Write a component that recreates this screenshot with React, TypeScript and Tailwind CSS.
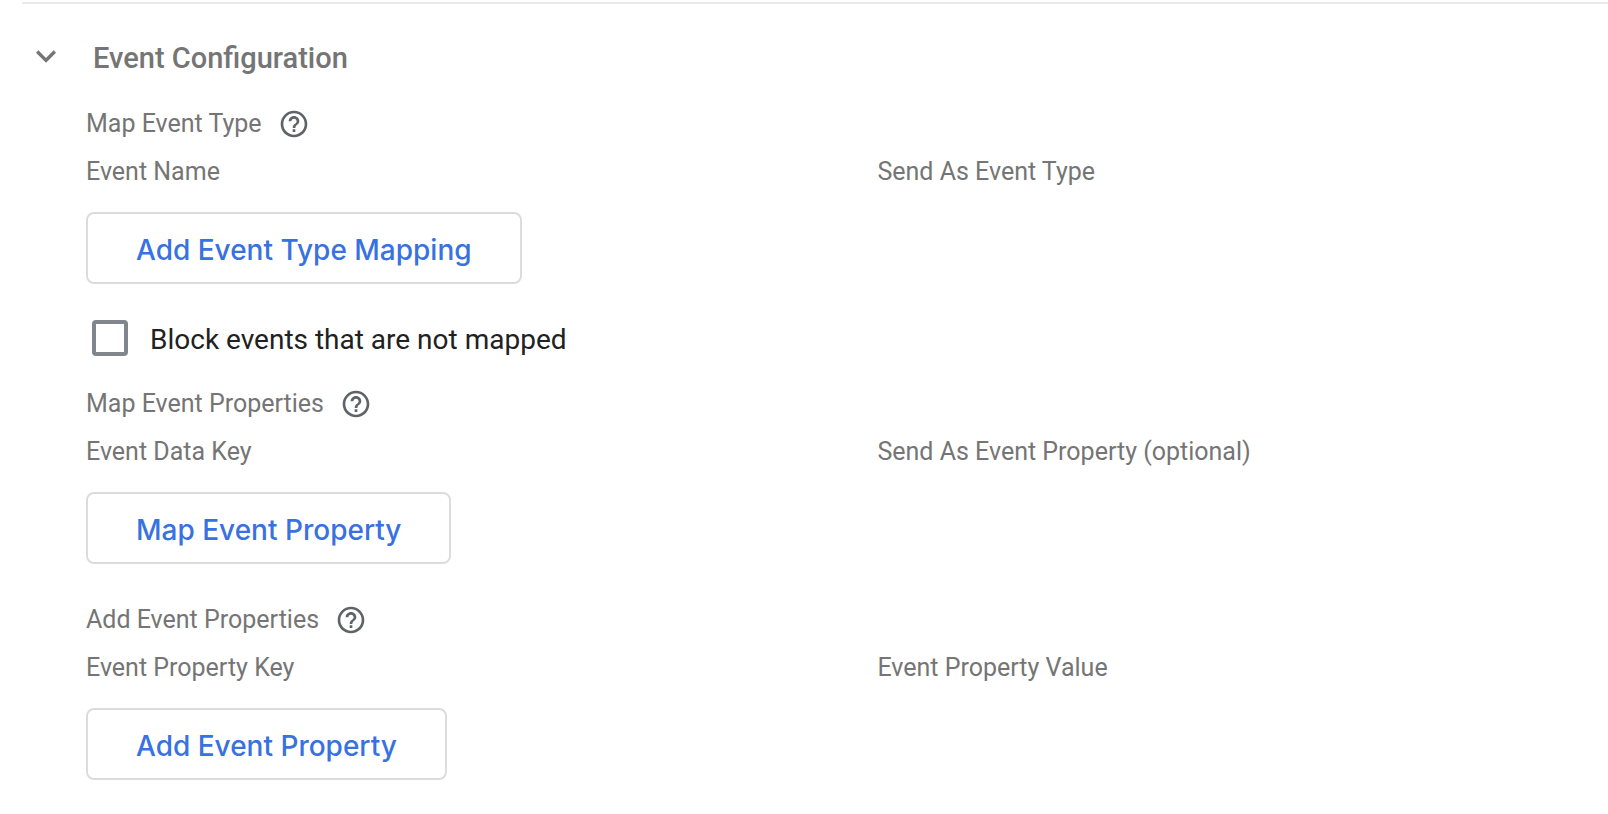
import { useState } from "react";
import { MdExpandMore, MdHelpOutline } from "react-icons/md";

type MappingSectionProps = {
  title: string;
  keyLabel: string;
  valueLabel: string;
  action: string;
};

function MappingSection({ title, keyLabel, valueLabel, action }: MappingSectionProps) {
  return (
    <section>
      <div className="flex items-center gap-4">
        <h3>{title}</h3>
        <button type="button" aria-label={`Help: ${title}`} className="text-[#5f6368]">
          <MdHelpOutline size={32} />
        </button>
      </div>
      <div className="grid grid-cols-[13fr_12fr]">
        <span>{keyLabel}</span>
        <span>{valueLabel}</span>
      </div>
      <button
        type="button"
        className="mt-4 flex h-18 items-center rounded-lg border-2 border-[#dadce0] px-12 pt-1 font-[Inter,sans-serif] text-[28px] font-medium text-[#3871e0]"
      >
        {action}
      </button>
    </section>
  );
}

export default function App() {
  const [open, setOpen] = useState(true);
  const [blocked, setBlocked] = useState(false);

  return (
    <main className="min-h-screen bg-white pt-0.5 font-[Roboto,sans-serif]">
      <div className="ml-[22px] border-t-2 border-[#e8e8ef] pt-8">
        <h2 className="pb-5 text-[29px] leading-[44px] font-medium text-[#757575]">
          <button
            type="button"
            aria-expanded={open}
            onClick={() => setOpen(!open)}
            className="flex items-start gap-[27px] pl-1"
          >
            <MdExpandMore size={40} />
            Event Configuration
          </button>
        </h2>
        {open && (
          <div className="pl-16 text-[25px] leading-[48px] text-[#757575]">
            <MappingSection
              title="Map Event Type"
              keyLabel="Event Name"
              valueLabel="Send As Event Type"
              action="Add Event Type Mapping"
            />
            <label className="mt-8 mb-5 flex h-11 w-fit items-center gap-[22px] pl-1.5 text-[28px] text-[#212121]">
              <input
                type="checkbox"
                checked={blocked}
                onChange={(e) => setBlocked(e.target.checked)}
                className="size-9 appearance-none rounded border-4 border-[#80868b] checked:bg-[#3871e0]"
              />
              <span className="pt-1">Block events that are not mapped</span>
            </label>
            <div className="flex flex-col gap-8">
              <MappingSection
                title="Map Event Properties"
                keyLabel="Event Data Key"
                valueLabel="Send As Event Property (optional)"
                action="Map Event Property"
              />
              <MappingSection
                title="Add Event Properties"
                keyLabel="Event Property Key"
                valueLabel="Event Property Value"
                action="Add Event Property"
              />
            </div>
          </div>
        )}
      </div>
    </main>
  );
}
